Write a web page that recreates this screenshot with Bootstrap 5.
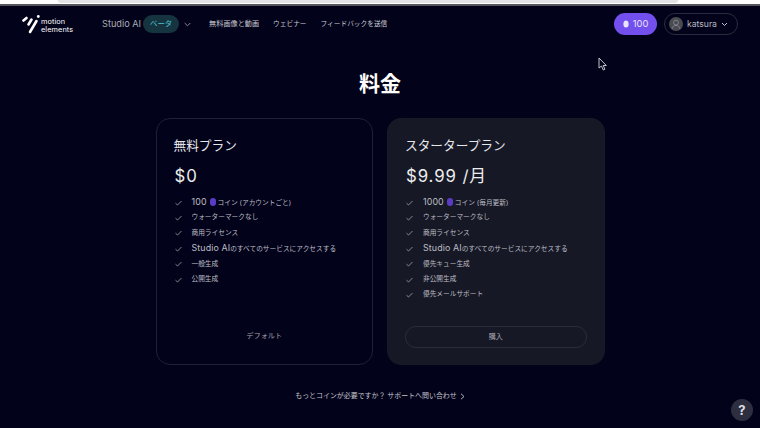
<!DOCTYPE html>
<html lang="ja">
<head>
<meta charset="utf-8">
<title>料金</title>
<link href="https://cdn.jsdelivr.net/npm/bootstrap@5.3.0/dist/css/bootstrap.min.css" rel="stylesheet">
<style>
html,body{height:100%}
body{background:#02021a;color:#d4d5da;font-family:Inter,"Noto Sans CJK JP",sans-serif;width:760px;height:428px;overflow:hidden;position:relative}
.chrome-strip{height:6px;background:#fff;border-bottom:2px solid #55565c}
.chrome-pill{height:3px;margin-left:58px;width:620px;background:#e3e3e5;border-radius:0 0 6px 6px}
.top-bar{height:36px;padding:0 22px}
.logo-wrap{width:80px;height:20px;color:#fff}
.logo-text{font-size:7.3px;line-height:8px;font-weight:400;letter-spacing:.1px;color:#fff;margin-left:1px;padding-top:3px}
.nav-studio{font-size:9.2px;color:#a9aab2}
.beta-pill{background:#15343f;color:#4fc0cf;font-size:7.4px;width:36px;height:18px;border-radius:9px;margin:0 5px 0 2px}
.nav-cjk{font-size:6.7px;color:#c9cad0;line-height:1}
.nav-first{margin-left:18px;font-size:7.15px}
.nav-next{margin-left:14px}
.coin-pill{background:#7350ee;color:#e8e3ff;width:43px;height:22px;border-radius:11px;font-size:9.4px;gap:4px}
.user-pill{width:74px;height:22px;border:1px solid #2a2b3c;border-radius:11px;margin-left:7px;font-size:8.6px;color:#b9bac2;padding-left:4px;gap:4px}
.avatar-dot{flex:none}
.page-title{font-size:21px;line-height:28px;font-weight:700;color:#fff;margin:0}
.title-zone{height:76px;padding-top:28px}
.plans{gap:14px;width:449px;margin:0 auto}
.plan-box{width:217.5px;height:247px;border-radius:14px;padding:17px 17px 0;position:relative}
.plan-free{border:1px solid #202134;background:#02021a}
.plan-paid{background:#161825;border:1px solid #181a28}
.plan-name{font-size:12.7px;line-height:20px;color:#e5e6ea;font-weight:400;margin:0}
.plan-price{font-size:16.8px;line-height:22px;letter-spacing:.9px;color:#eceded;margin:9px 0 8px;padding-left:1px;font-weight:400}
.feat{font-size:6.7px;line-height:15.4px;color:#bcbdc4;gap:10px;height:15.4px;padding-left:1px}
.feat-num{font-size:8.9px;letter-spacing:.1px}
.coin-mini{width:6px;height:8px;border-radius:3px;background:#5a3bc4;display:inline-block;vertical-align:-1px;margin:0 2px 0 3px}
.chk{flex:none}
.plan-default{position:absolute;left:0;right:0;top:206px;text-align:center;font-size:7.2px;line-height:22px;color:#a2a3ab}
.plan-buy{position:absolute;left:17px;right:17px;top:207px;height:22px;border:1px solid #2a2c3a;border-radius:11px;background:transparent;color:#a9aab2;font-size:7px;padding:0;line-height:20px}
.foot-link{font-size:6.95px;color:#c3c4ca;margin-top:26px;gap:3px;line-height:10px}
.help-btn{position:absolute;left:731px;top:399px;width:22px;height:22px;border-radius:50%;background:#2d2f40;color:#dcdde2;font-size:13px;font-weight:700;line-height:1}
.cursor-mark{position:absolute;left:598px;top:57px}
</style>
</head>
<body>
<div class="chrome-strip"><div class="chrome-pill"></div></div>
<nav class="top-bar d-flex align-items-center">
  <div class="logo-wrap d-flex align-items-center">
    <svg width="18" height="20" viewBox="0 0 18 20" fill="none" stroke="#fff" stroke-linecap="round" stroke-width="2.6">
      <path d="M1.500 6.500 4.500 4"/><path d="M6.500 10.500 9.500 5.500"/><path d="M8 18 14.500 7"/>
      <circle cx="16.300" cy="2.500" r="1.400" fill="#fff" stroke="none"/>
    </svg>
    <div class="logo-text">motion<br>elements</div>
  </div>
  <span class="nav-studio">Studio AI</span>
  <span class="beta-pill d-flex align-items-center justify-content-center">ベータ</span>
  <svg width="7" height="5" viewBox="0 0 7 5" fill="none" stroke="#8a8b94"><path d="M.7 1l2.800 2.800L6.300 1"/></svg>
  <span class="nav-cjk nav-first">無料画像と動画</span>
  <span class="nav-cjk nav-next">ウェビナー</span>
  <span class="nav-cjk nav-next">フィードバックを送信</span>
  <div class="ms-auto d-flex align-items-center">
    <span class="coin-pill d-flex align-items-center justify-content-center">
      <svg width="6" height="8"><ellipse cx="3" cy="4" rx="2.600" ry="3.600" fill="#e8e3ff"/></svg>100
    </span>
    <span class="user-pill d-flex align-items-center">
      <svg class="avatar-dot" width="14" height="14" viewBox="0 0 14 14"><circle cx="7" cy="7" r="7" fill="#4a4a52"/><circle cx="7" cy="5.600" r="2.400" fill="none" stroke="#8d8d94" stroke-width=".8"/><path d="M3 12c.6-2.600 2-3.600 4-3.600s3.400 1 4 3.600" fill="none" stroke="#8d8d94" stroke-width=".8"/></svg>katsura
      <svg width="7" height="5" viewBox="0 0 7 5" fill="none" stroke="#c8c9d0"><path d="M1 1l2.500 2.500L6 1"/></svg>
    </span>
  </div>
</nav>
<div class="title-zone text-center"><h1 class="page-title">料金</h1></div>
<div class="plans d-flex">
  <section class="plan-box plan-free">
    <h2 class="plan-name">無料プラン</h2>
    <p class="plan-price">$0</p>
    <div class="feat d-flex align-items-center"><svg class="chk" width="7" height="6" viewBox="0 0 7 6" fill="none" stroke="#a5a6ae" stroke-width=".8"><path d="M.5 3.200 2.500 5 6.500 1"/></svg><span><span class="feat-num">100</span><i class="coin-mini"></i>コイン (アカウントごと)</span></div>
    <div class="feat d-flex align-items-center"><svg class="chk" width="7" height="6" viewBox="0 0 7 6" fill="none" stroke="#a5a6ae" stroke-width=".8"><path d="M.5 3.200 2.500 5 6.500 1"/></svg><span>ウォーターマークなし</span></div>
    <div class="feat d-flex align-items-center"><svg class="chk" width="7" height="6" viewBox="0 0 7 6" fill="none" stroke="#a5a6ae" stroke-width=".8"><path d="M.5 3.200 2.500 5 6.500 1"/></svg><span>商用ライセンス</span></div>
    <div class="feat d-flex align-items-center"><svg class="chk" width="7" height="6" viewBox="0 0 7 6" fill="none" stroke="#a5a6ae" stroke-width=".8"><path d="M.5 3.200 2.500 5 6.500 1"/></svg><span><span class="feat-num">Studio AI</span>のすべてのサービスにアクセスする</span></div>
    <div class="feat d-flex align-items-center"><svg class="chk" width="7" height="6" viewBox="0 0 7 6" fill="none" stroke="#a5a6ae" stroke-width=".8"><path d="M.5 3.200 2.500 5 6.500 1"/></svg><span>一般生成</span></div>
    <div class="feat d-flex align-items-center"><svg class="chk" width="7" height="6" viewBox="0 0 7 6" fill="none" stroke="#a5a6ae" stroke-width=".8"><path d="M.5 3.200 2.500 5 6.500 1"/></svg><span>公開生成</span></div>
    <div class="plan-default">デフォルト</div>
  </section>
  <section class="plan-box plan-paid">
    <h2 class="plan-name">スタータープラン</h2>
    <p class="plan-price">$9.99 /月</p>
    <div class="feat d-flex align-items-center"><svg class="chk" width="7" height="6" viewBox="0 0 7 6" fill="none" stroke="#a5a6ae" stroke-width=".8"><path d="M.5 3.200 2.500 5 6.500 1"/></svg><span><span class="feat-num">1000</span><i class="coin-mini"></i>コイン (毎月更新)</span></div>
    <div class="feat d-flex align-items-center"><svg class="chk" width="7" height="6" viewBox="0 0 7 6" fill="none" stroke="#a5a6ae" stroke-width=".8"><path d="M.5 3.200 2.500 5 6.500 1"/></svg><span>ウォーターマークなし</span></div>
    <div class="feat d-flex align-items-center"><svg class="chk" width="7" height="6" viewBox="0 0 7 6" fill="none" stroke="#a5a6ae" stroke-width=".8"><path d="M.5 3.200 2.500 5 6.500 1"/></svg><span>商用ライセンス</span></div>
    <div class="feat d-flex align-items-center"><svg class="chk" width="7" height="6" viewBox="0 0 7 6" fill="none" stroke="#a5a6ae" stroke-width=".8"><path d="M.5 3.200 2.500 5 6.500 1"/></svg><span><span class="feat-num">Studio AI</span>のすべてのサービスにアクセスする</span></div>
    <div class="feat d-flex align-items-center"><svg class="chk" width="7" height="6" viewBox="0 0 7 6" fill="none" stroke="#a5a6ae" stroke-width=".8"><path d="M.5 3.200 2.500 5 6.500 1"/></svg><span>優先キュー生成</span></div>
    <div class="feat d-flex align-items-center"><svg class="chk" width="7" height="6" viewBox="0 0 7 6" fill="none" stroke="#a5a6ae" stroke-width=".8"><path d="M.5 3.200 2.500 5 6.500 1"/></svg><span>非公開生成</span></div>
    <div class="feat d-flex align-items-center"><svg class="chk" width="7" height="6" viewBox="0 0 7 6" fill="none" stroke="#a5a6ae" stroke-width=".8"><path d="M.5 3.200 2.500 5 6.500 1"/></svg><span>優先メールサポート</span></div>
    <button class="btn plan-buy" type="button">購入</button>
  </section>
</div>
<div class="foot-link d-flex justify-content-center align-items-center">
  <span>もっとコインが必要ですか？ サポートへ問い合わせ</span>
  <svg width="5" height="7" viewBox="0 0 5 7" fill="none" stroke="#c3c4ca" stroke-width=".9"><path d="M1 .8 4 3.500 1 6.200"/></svg>
</div>
<div class="help-btn d-flex align-items-center justify-content-center">?</div>
<svg class="cursor-mark" width="9" height="14" viewBox="0 0 9 14"><path d="M1 1v10l2.500-2 1.800 4 1.600-.8L5.200 8.500H8.300z" fill="#02021a" stroke="#d8d8dc" stroke-width=".9"/></svg>
</body>
</html>
